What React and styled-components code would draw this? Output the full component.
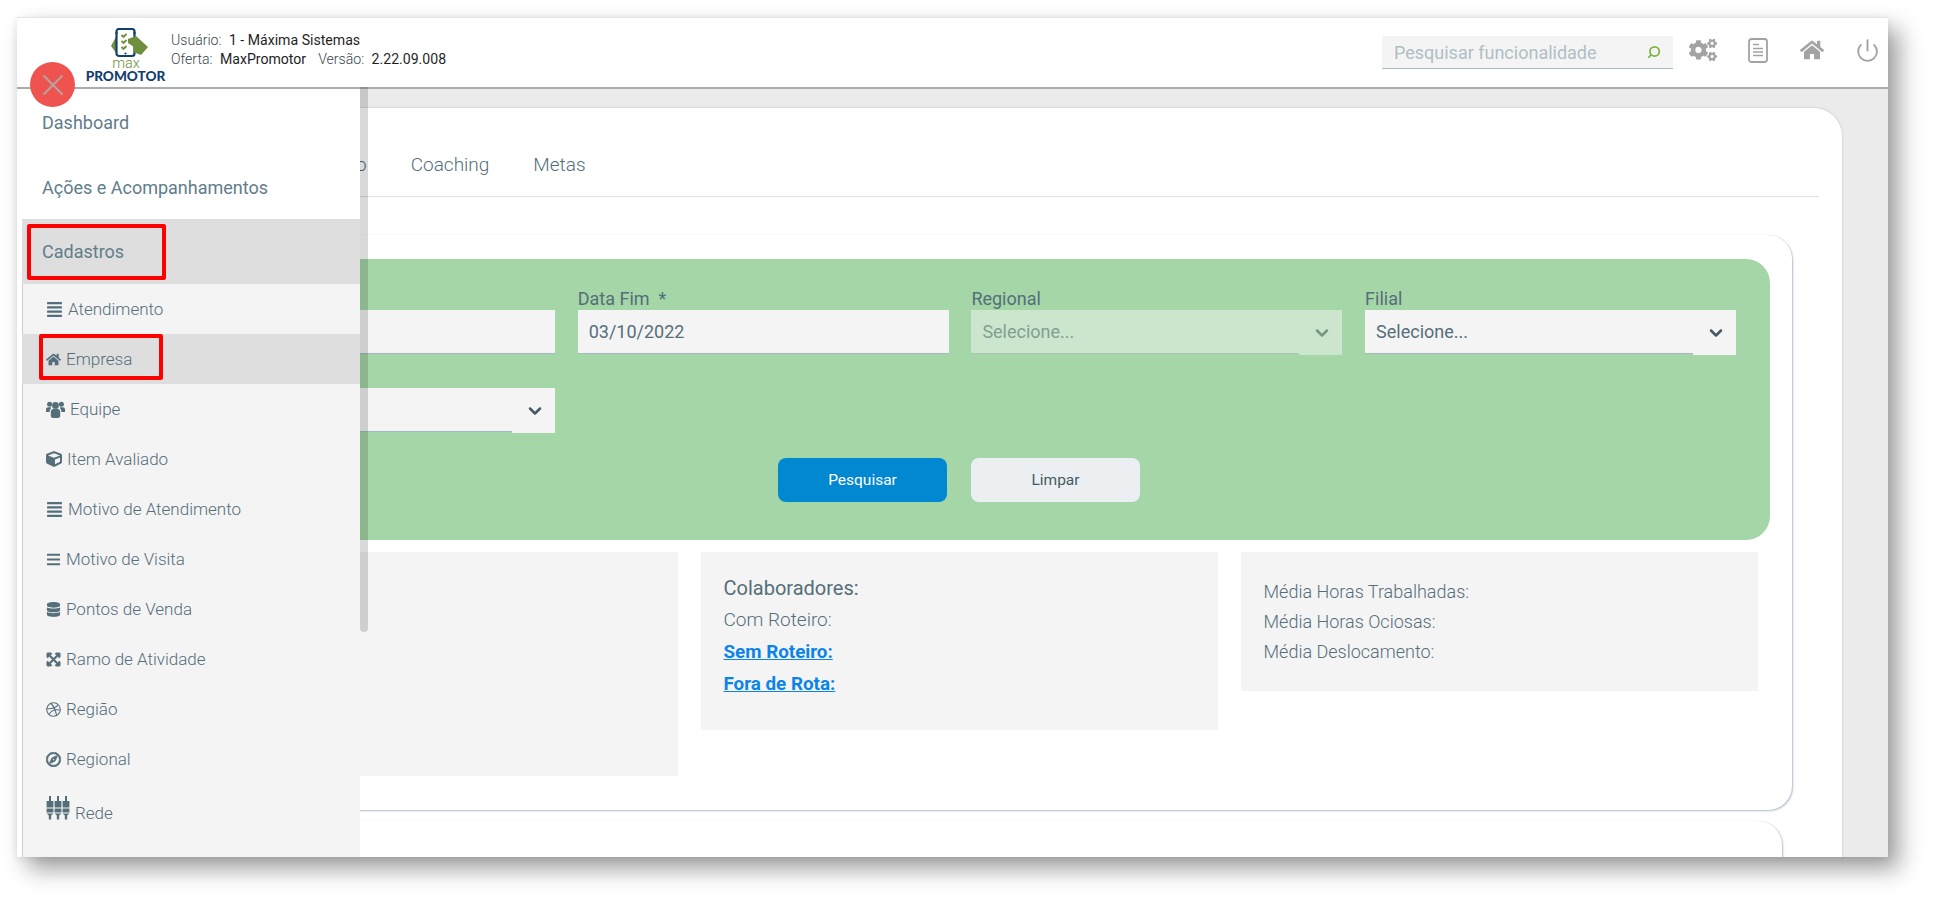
import React from 'react';
import styled, { createGlobalStyle } from 'styled-components';
import {
  FaAlignJustify, FaBars, FaCircle, FaCogs, FaCube, FaDatabase, FaDribbble,
  FaExpandArrowsAlt, FaHome, FaRegCompass,
} from 'react-icons/fa';
import { ChevronDown, Power, Search, X } from 'lucide-react';

const GlobalStyle = createGlobalStyle`
  html, body {
    margin: 0;
    background: #fff;
    overflow: hidden;
  }
  body {
    font-family: Roboto, "Liberation Sans", sans-serif;
    color: #546e7a;
  }
`;

const Page = styled.div`
  height: 904px;
  padding: 17px 48px 0 17px;
  box-sizing: border-box;
`;

const Window = styled.div`
  position: relative;
  height: 839px;
  overflow: hidden;
  background: #ebebeb;
  border-top: 1px solid #e6e6e6;
  box-shadow: 11px 12px 22px rgba(0, 0, 0, 0.38), -1px 2px 8px rgba(0, 0, 0, 0.08);
`;

const Header = styled.header`
  height: 69px;
  display: flex;
  align-items: flex-start;
  background: #fff;
  border-bottom: 2px solid #ababab;
`;

const Logo = styled.div`
  width: 85px;
  margin: 10px 0 0 66px;
  display: flex;
  flex-direction: column;
  align-items: center;
`;

const LogoMark = styled.svg`
  display: block;
  margin-left: 9px;
`;

const LogoMax = styled.span`
  font-size: 14.5px;
  line-height: 11px;
  font-weight: 300;
  color: #6f8f3d;
  margin-left: 1px;
`;

const LogoName = styled.span`
  margin-top: 1px;
  font-family: Lato, sans-serif;
  font-size: 13.6px;
  line-height: 12px;
  font-weight: 900;
  color: #14406f;
`;

const UserInfo = styled.div`
  margin: 13px 0 0 3px;
  font-size: 14.1px;
  line-height: 19px;
  font-weight: 300;
  color: #37474f;
`;

const InfoLine = styled.div`
  white-space: nowrap;
`;

const InfoValue = styled.span`
  font-weight: 400;
  color: #1f1f1f;
  margin: 0 12px 0 4px;
`;

const SearchBox = styled.div`
  width: 291px;
  height: 33px;
  margin: 18px 0 0 auto;
  padding: 0 12px;
  display: flex;
  align-items: center;
  justify-content: space-between;
  box-sizing: border-box;
  background: #f4f4f4;
  border-bottom: 1px solid #a9bac3;
  font-size: 18px;
  color: #b0bec5;
`;

const HeaderIcons = styled.div`
  width: 215px;
  height: 64px;
  display: flex;
  align-items: center;
  justify-content: space-between;
  padding: 0 8px 0 16px;
  box-sizing: border-box;
  color: #a3a3a3;
`;

const Content = styled.main`
  padding: 19px 46px 0 61px;
`;

const MainCard = styled.section`
  background: #fff;
  border-radius: 28px 28px 0 0;
  padding: 0 23px 0 50px;
  height: 760px;
  box-shadow: 0 0 2px rgba(120, 130, 150, 0.5);
`;

const Tabs = styled.nav`
  height: 89px;
  display: flex;
  align-items: center;
  gap: 44px;
  padding: 25px 0 0 84px;
  border-bottom: 1px solid #e0e0e0;
  box-sizing: border-box;
  font-size: 19px;
  font-weight: 300;
  color: #546e7a;
`;

const Card = styled.div`
  margin: ${({ $top }) => $top}px ${({ $right }) => $right}px 0 0;
  padding-top: ${({ $padTop }) => $padTop || 0}px;
  min-height: ${({ $minHeight }) => $minHeight || 0}px;
  background: #fff;
  border-radius: 24px;
  box-shadow: 1px 1px 2px rgba(150, 160, 185, 0.7), 0 0 1px rgba(0, 0, 0, 0.12);
`;

const SearchPanel = styled.div`
  margin: 0 22px;
  padding: 31px 34px 38px;
  background: #a5d6a7;
  border-radius: 24px;
`;

const FieldGrid = styled.div`
  display: grid;
  grid-template-columns: repeat(4, 371px);
  column-gap: 22.7px;
  row-gap: 13px;
`;

const Field = styled.label`
  display: block;
`;

const FieldLabel = styled.div`
  height: 20px;
  font-size: 18px;
  line-height: 17px;
  color: #546e7a;
`;

const DateInput = styled.div`
  height: 44px;
  padding: 0 11px;
  display: flex;
  align-items: center;
  box-sizing: border-box;
  background: #f4f4f4;
  border-bottom: 1px solid #a9b8c0;
  font-size: 18px;
  color: #546e7a;
`;

const SelectWrap = styled.div`
  display: flex;
  height: 45px;
  opacity: ${({ $disabled }) => ($disabled ? 0.5 : 1)};
`;

const SelectValue = styled(DateInput)`
  flex: 1;
`;

const SelectArrow = styled.div`
  width: 43px;
  display: flex;
  align-items: center;
  justify-content: center;
  background: #f4f4f4;
  color: #455a64;
  padding-left: 2px;
  box-sizing: border-box;
`;

const ButtonRow = styled.div`
  margin-top: 25px;
  display: flex;
  justify-content: center;
  gap: 24px;
  padding-right: 2px;
`;

const Button = styled.button`
  width: 169px;
  height: 44px;
  border: 0;
  border-radius: 8px;
  font-family: inherit;
  font-size: 15.5px;
  background: ${({ $primary }) => ($primary ? '#0288d1' : '#eceff1')};
  color: ${({ $primary }) => ($primary ? '#fff' : '#455a64')};
`;

const StatsGrid = styled.div`
  margin-top: 12px;
  padding: 0 34px 34px 32.5px;
  display: grid;
  grid-template-columns: repeat(3, 517px);
  column-gap: 23px;
  align-items: start;
`;

const StatBox = styled.div`
  background: #f4f4f4;
  box-sizing: border-box;
  padding: ${({ $pad }) => $pad};
  min-height: ${({ $minHeight }) => $minHeight || 0}px;
`;

const StatTitle = styled.div`
  font-size: 20px;
  line-height: 32px;
  color: #546e7a;
`;

const StatLine = styled.div`
  font-size: ${({ $size }) => $size || 19}px;
  line-height: ${({ $line }) => $line || 32}px;
  font-weight: 300;
  color: #546e7a;
`;

const StatLink = styled.a`
  display: block;
  font-size: 18.8px;
  line-height: 32px;
  font-weight: 700;
  color: #0a84e8;
  text-decoration: underline;
`;

const Sidebar = styled.aside`
  position: absolute;
  left: 0;
  top: 71px;
  bottom: 0;
  width: 343px;
  box-sizing: border-box;
  border-left: 5px solid #fff;
  background: #f4f4f4;
  overflow: hidden;
  box-shadow: inset 1px 0 0 #c9cdd5;
  z-index: 2;
`;

const MenuItem = styled.div`
  position: relative;
  height: 65px;
  display: flex;
  align-items: center;
  padding: ${({ $active }) => ($active ? 0 : 2)}px 0 0 20px;
  box-sizing: border-box;
  font-size: 18px;
  color: #607d8b;
  background: ${({ $active }) => ($active ? '#dedede' : '#fff')};
`;

const SubItem = styled.div`
  position: relative;
  height: ${({ $tall }) => ($tall ? 56 : 50)}px;
  display: flex;
  align-items: ${({ $tall }) => ($tall ? 'flex-start' : 'center')};
  padding: ${({ $tall }) => ($tall ? '12px 0 0 24px' : '0 0 0 24px')};
  box-sizing: border-box;
  gap: 5px;
  font-size: 17px;
  font-weight: 300;
  color: #546e7a;
  background: ${({ $active }) => ($active ? '#dedede' : 'transparent')};
  svg {
    flex: none;
    color: #546e7a;
  }
`;

const RedeLabel = styled.span`
  margin-top: 7px;
`;

const Highlight = styled.span`
  position: absolute;
  left: ${({ $left }) => $left}px;
  top: ${({ $top }) => $top}px;
  width: ${({ $width }) => $width}px;
  height: ${({ $height }) => $height}px;
  box-sizing: border-box;
  border: 4px solid #f00;
  border-radius: 2px;
`;

const ScrollThumb = styled.div`
  position: absolute;
  left: 343px;
  top: 69px;
  width: 8px;
  height: 545px;
  border-radius: 0 0 4px 4px;
  background: rgba(0, 0, 0, 0.15);
  z-index: 2;
`;

const CloseButton = styled.button`
  position: absolute;
  left: 13px;
  top: 44px;
  width: 45px;
  height: 45px;
  padding: 0;
  display: flex;
  align-items: center;
  justify-content: center;
  border: 0;
  border-radius: 50%;
  background: #ef5350;
  color: #b3a6a6;
  z-index: 3;
`;

const FlippedSearch = styled(Search)`
  transform: scaleX(-1);
  color: #7cb342;
`;

function Brand() {
  return (
    <LogoMark width="38" height="30" viewBox="0 0 38 30">
      <path d="M6 7 L0 18 L6 26 L9 25 L9 9 Z" fill="#6f8f3d" />
      <rect x="5.5" y="1" width="18" height="27" rx="2.5" fill="#fff" stroke="#14406f" strokeWidth="2.2" />
      <path d="M4 5h3M22 5h3" stroke="#14406f" strokeWidth="1" />
      <path d="M10.5 7l2 2 3-3M10.5 13l2 2 3-3M10.5 19l2 2 3-3" fill="none" stroke="#6f8f3d" strokeWidth="1.9" />
      <path d="M17 11 L25 8 L37 19 L30 27 L22 24 L23 19 L17 15 Z" fill="#6f8f3d" />
      <circle cx="14.5" cy="25.5" r="1.1" fill="#14406f" />
    </LogoMark>
  );
}

function DocIcon() {
  return (
    <svg width="20" height="25" viewBox="0 0 20 25" fill="none" stroke="currentColor">
      <rect x="1" y="1" width="18" height="23" rx="2.5" strokeWidth="1.8" />
      <path d="M5 6.5h6M5 10.5h10M5 14h10M5 17.5h10" strokeWidth="1.6" />
    </svg>
  );
}

function TeamIcon() {
  return (
    <svg width="19" height="17" viewBox="0 0 19 17" fill="currentColor">
      <circle cx="3.6" cy="3.2" r="2.5" />
      <circle cx="15.4" cy="3.2" r="2.5" />
      <path d="M0 11V8.2C0 7 1 6.2 2.2 6.2h2.6l.5.9C4.2 8 3.6 9.4 3.6 11z" />
      <path d="M19 11V8.2c0-1.2-1-2-2.2-2h-2.6l-.5.9c1.1.9 1.7 2.3 1.7 3.9z" />
      <circle cx="9.5" cy="4.4" r="3.4" />
      <path d="M4.8 15V11c0-1.9 1.4-3.2 3-3.2h3.4c1.6 0 3 1.3 3 3.2v4c0 1.2-1 2-2.4 2H7.2c-1.4 0-2.4-.8-2.4-2z" />
    </svg>
  );
}

function RedeIcon() {
  const xs = [4, 12, 20];
  return (
    <svg width="24" height="24" viewBox="0 0 24 24" fill="#546e7a">
      {xs.map((x) => (
        <g key={x}>
          <rect x={x - 1} y="0" width="2" height="6" />
          <rect x={x - 3.4} y="5" width="6.8" height="6.5" />
          <rect x={x - 3.4} y="12.5" width="6.8" height="4" />
          <path d={`M${x - 3.4} 17.5h6.8l-2.2 2v4h-2.4v-4z`} />
        </g>
      ))}
    </svg>
  );
}

const subItems = [
  { label: 'Atendimento', icon: <FaAlignJustify size={17} /> },
  { label: 'Empresa', icon: <FaHome size={15} />, active: true, box: { $left: 17, $top: 0, $width: 124, $height: 46 } },
  { label: 'Equipe', icon: <TeamIcon /> },
  { label: 'Item Avaliado', icon: <FaCube size={16} /> },
  { label: 'Motivo de Atendimento', icon: <FaAlignJustify size={17} /> },
  { label: 'Motivo de Visita', icon: <FaBars size={15} /> },
  { label: 'Pontos de Venda', icon: <FaDatabase size={15} /> },
  { label: 'Ramo de Atividade', icon: <FaExpandArrowsAlt size={15} stroke="currentColor" strokeWidth={30} /> },
  { label: 'Região', icon: <FaDribbble size={15} /> },
  { label: 'Regional', icon: <FaRegCompass size={15} stroke="currentColor" strokeWidth={25} /> },
];

function Select({ value, disabled }) {
  return (
    <SelectWrap $disabled={disabled}>
      <SelectValue>{value}</SelectValue>
      <SelectArrow>
        <ChevronDown size={20} strokeWidth={3} />
      </SelectArrow>
    </SelectWrap>
  );
}

export default function App() {
  return (
    <Page>
      <GlobalStyle />
      <Window>
        <Header>
          <Logo>
            <Brand />
            <LogoMax>max</LogoMax>
            <LogoName>PROMOTOR</LogoName>
          </Logo>
          <UserInfo>
            <InfoLine>Usuário: <InfoValue>1 - Máxima Sistemas</InfoValue></InfoLine>
            <InfoLine>Oferta: <InfoValue>MaxPromotor</InfoValue>Versão: <InfoValue>2.22.09.008</InfoValue></InfoLine>
          </UserInfo>
          <SearchBox>
            Pesquisar funcionalidade
            <FlippedSearch size={14} strokeWidth={3} />
          </SearchBox>
          <HeaderIcons>
            <FaCogs size={28} />
            <DocIcon />
            <FaHome size={24} />
            <Power size={25} strokeWidth={1.8} />
          </HeaderIcons>
        </Header>

        <Content>
          <MainCard>
            <Tabs>
              <span>Acompanhamento</span>
              <span>Coaching</span>
              <span>Metas</span>
            </Tabs>
            <Card $top={38} $right={27} $padTop={24}>
              <SearchPanel>
                <FieldGrid>
                  <Field>
                    <FieldLabel>Data Início *</FieldLabel>
                    <DateInput>03/10/2022</DateInput>
                  </Field>
                  <Field>
                    <FieldLabel>Data Fim&nbsp; *</FieldLabel>
                    <DateInput>03/10/2022</DateInput>
                  </Field>
                  <Field>
                    <FieldLabel>Regional</FieldLabel>
                    <Select value="Selecione..." disabled />
                  </Field>
                  <Field>
                    <FieldLabel>Filial</FieldLabel>
                    <Select value="Selecione..." />
                  </Field>
                  <Field>
                    <FieldLabel>Equipe</FieldLabel>
                    <Select value="Selecione..." />
                  </Field>
                </FieldGrid>
                <ButtonRow>
                  <Button $primary>Pesquisar</Button>
                  <Button>Limpar</Button>
                </ButtonRow>
              </SearchPanel>
              <StatsGrid>
                <StatBox $pad="20px 22px" $minHeight={224} />
                <StatBox $pad="20px 23px 30px">
                  <StatTitle>Colaboradores:</StatTitle>
                  <StatLine>Com Roteiro:</StatLine>
                  <StatLink>Sem Roteiro:</StatLink>
                  <StatLink>Fora de Rota:</StatLink>
                </StatBox>
                <StatBox $pad="25px 23px 24px">
                  <StatLine $line={30} $size={18}>Média Horas Trabalhadas:</StatLine>
                  <StatLine $line={30} $size={18}>Média Horas Ociosas:</StatLine>
                  <StatLine $line={30} $size={18}>Média Deslocamento:</StatLine>
                </StatBox>
              </StatsGrid>
            </Card>
            <Card $top={11} $right={37} $minHeight={60} />
          </MainCard>
        </Content>

        <Sidebar>
          <MenuItem>Dashboard</MenuItem>
          <MenuItem>Ações e Acompanhamentos</MenuItem>
          <MenuItem $active>
            Cadastros
            <Highlight $left={5} $top={5} $width={139} $height={56} />
          </MenuItem>
          {subItems.map((item) => (
            <SubItem key={item.label} $active={item.active}>
              {item.icon}
              {item.label}
              {item.box && <Highlight {...item.box} />}
            </SubItem>
          ))}
          <SubItem $tall>
            <RedeIcon />
            <RedeLabel>Rede</RedeLabel>
          </SubItem>
          <SubItem>
            <FaCircle size={15} />
          </SubItem>
        </Sidebar>
        <ScrollThumb />
        <CloseButton aria-label="Fechar">
          <X size={36} strokeWidth={1.2} />
        </CloseButton>
      </Window>
    </Page>
  );
}
